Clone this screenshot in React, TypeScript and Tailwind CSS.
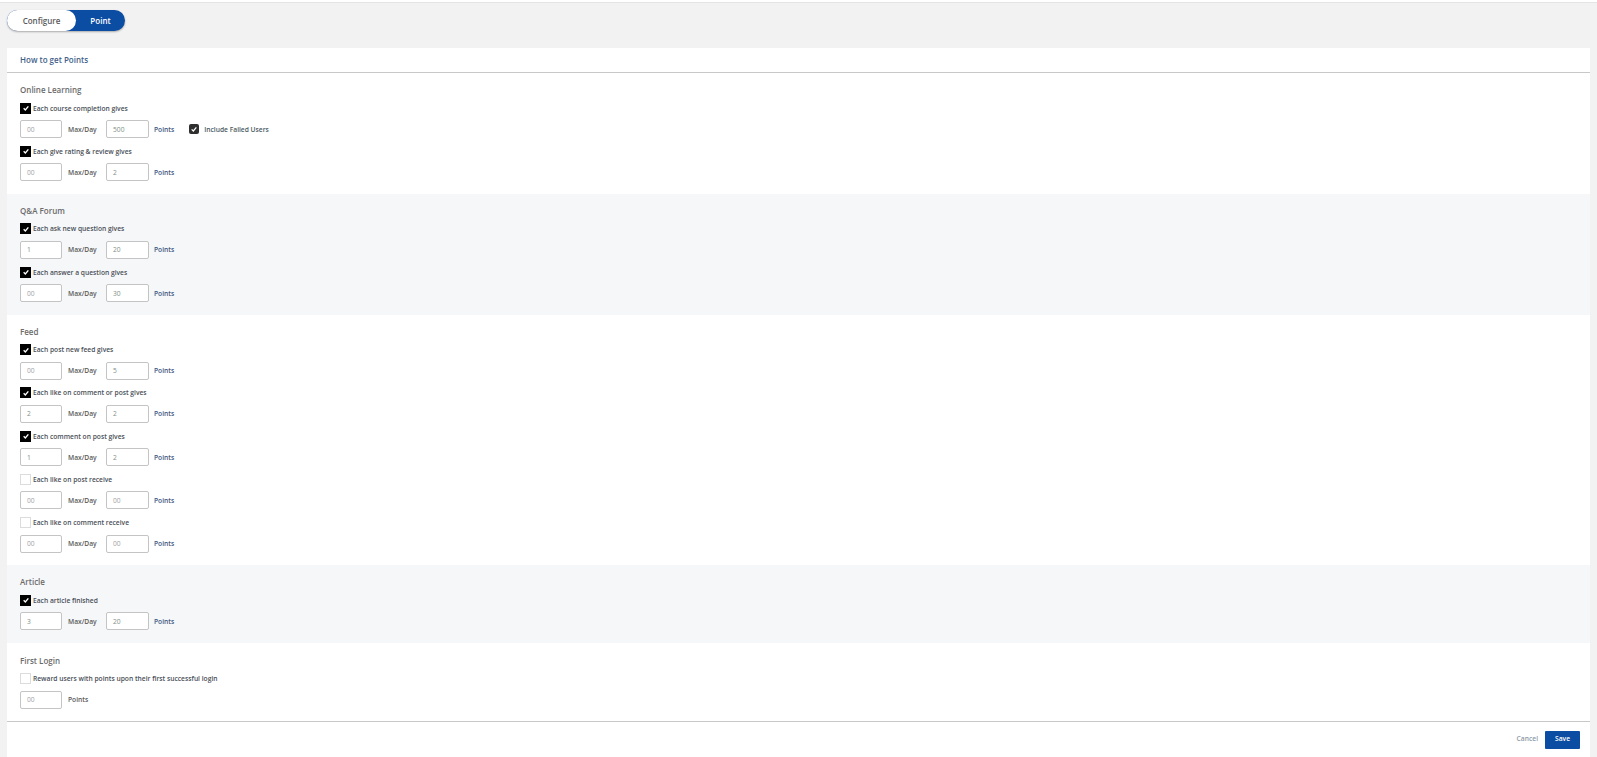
import React from 'react';

interface Rule {
  label: string;
  checked: boolean;
  max: string;
  points: string;
  extra?: boolean;
}

interface Section {
  title: string;
  gray?: boolean;
  rules: Rule[];
}

const sections: Section[] = [
  {
    title: 'Online Learning',
    rules: [
      { label: 'Each course completion gives', checked: true, max: '00', points: '500', extra: true },
      { label: 'Each give rating & review gives', checked: true, max: '00', points: '2' },
    ],
  },
  {
    title: 'Q&A Forum',
    gray: true,
    rules: [
      { label: 'Each ask new question gives', checked: true, max: '1', points: '20' },
      { label: 'Each answer a question gives', checked: true, max: '00', points: '30' },
    ],
  },
  {
    title: 'Feed',
    rules: [
      { label: 'Each post new feed gives', checked: true, max: '00', points: '5' },
      { label: 'Each like on comment or post gives', checked: true, max: '2', points: '2' },
      { label: 'Each comment on post gives', checked: true, max: '1', points: '2' },
      { label: 'Each like on post receive', checked: false, max: '00', points: '00' },
      { label: 'Each like on comment receive', checked: false, max: '00', points: '00' },
    ],
  },
  {
    title: 'Article',
    gray: true,
    rules: [{ label: 'Each article finished', checked: true, max: '3', points: '20' }],
  },
];

const Check = ({ checked }: { checked: boolean }) =>
  checked ? (
    <span className="flex h-[11px] w-[11px] items-center justify-center bg-black">
      <svg viewBox="0 0 12 12" className="h-[8px] w-[8px]" fill="none" stroke="white" strokeWidth="2">
        <path d="M2.5 6.5 5 9l4.5-5.5" />
      </svg>
    </span>
  ) : (
    <span className="h-[11px] w-[11px] border border-[#dcdcdc] bg-white" />
  );

const Field = ({ value, wide }: { value: string; wide?: boolean }) => (
  <input
    readOnly
    value={value}
    className={`h-[18px] rounded-[2px] border border-[#c4c4c4] bg-white pl-[6px] text-[6.7px] outline-none ${
      wide ? 'w-[43px]' : 'w-[42px]'
    } ${value === '00' ? 'text-[#a3a3a3]' : 'text-[#7f8f86]'}`}
  />
);

const Unit = ({ children, blue }: { children: React.ReactNode; blue?: boolean }) => (
  <span className={`block text-[6.7px] font-semibold leading-[11px] ${blue ? 'text-[#3f5680]' : 'text-[#5a5a5a]'}`}>
    {children}
  </span>
);

const RuleRow = ({ rule }: { rule: Rule }) => (
  <div className="flex flex-col gap-[6.5px]">
    <div className="flex h-[11px] items-center gap-[2px]">
      <Check checked={rule.checked} />
      <span className="text-[6.7px] font-semibold leading-[11px] text-[#4a4f57]">{rule.label}</span>
    </div>
    <div className="flex h-[18px] items-center">
      <Field value={rule.max} />
      <div className="ml-[6px] w-[38px]">
        <Unit>Max/Day</Unit>
      </div>
      <Field value={rule.points} wide />
      <div className="ml-[5px]">
        <Unit blue>Points</Unit>
      </div>
      {rule.extra && (
        <div className="ml-[15px] flex items-center gap-[5px]">
          <span className="flex h-[10px] w-[10px] items-center justify-center rounded-[2px] bg-[#2f2f2f]">
            <svg viewBox="0 0 12 12" className="h-[8px] w-[8px]" fill="none" stroke="white" strokeWidth="1.8">
              <path d="M2.5 6.5 5 9l4.5-5.5" />
            </svg>
          </span>
          <span className="text-[6.7px] font-semibold leading-[11px] text-[#4a5a63]">Include Failed Users</span>
        </div>
      )}
    </div>
  </div>
);

const SectionBlock = ({ section }: { section: Section }) => (
  <section className={`px-[13px] pb-[12.5px] pt-[11px] ${section.gray ? 'bg-[#f6f7f9]' : 'bg-white'}`}>
    <h3 className="mb-[7.5px] h-[11px] text-[8px] font-semibold leading-[11px] text-[#6b6b6b]">{section.title}</h3>
    <div className="flex flex-col gap-[7.75px]">
      {section.rules.map((rule) => (
        <RuleRow key={rule.label} rule={rule} />
      ))}
    </div>
  </section>
);

export default function App() {
  return (
    <div className="h-[757px] w-[1597px] overflow-hidden bg-[#f2f2f2] font-['Open_Sans',sans-serif]">
      <div className="h-[3px] border-b border-[#e4e4e4] bg-white" />
      <div className="px-[7px] pb-[17px] pt-[7px]">
        <div className="flex h-[21px] w-[118px] rounded-full bg-[#0b4da2] shadow-[0_1px_2px_rgba(0,0,0,0.3)]">
          <button className="w-[69px] rounded-full bg-white text-[8px] font-semibold leading-none text-[#5a5a5a]">Configure</button>
          <button className="flex-1 text-[8px] font-semibold leading-none text-white">Point</button>
        </div>
      </div>
      <div className="ml-[7px] w-[1583px] bg-white">
        <div className="flex h-[25px] items-center border-b border-[#c8c8c8] px-[13px] text-[8px] font-semibold text-[#3f5f8a]">
          How to get Points
        </div>
        {sections.map((section) => (
          <SectionBlock key={section.title} section={section} />
        ))}
        <section className="border-b border-[#c8c8c8] bg-white px-[13px] pb-[12px] pt-[12px]">
          <h3 className="mb-[7.5px] h-[11px] text-[8px] font-semibold leading-[11px] text-[#6b6b6b]">First Login</h3>
          <div className="flex flex-col gap-[6.5px]">
            <div className="flex h-[11px] items-center gap-[2px]">
              <Check checked={false} />
              <span className="text-[6.7px] font-semibold leading-[11px] text-[#4a4f57]">
                Reward users with points upon their first successful login
              </span>
            </div>
            <div className="flex h-[18px] items-center gap-[6px]">
              <Field value="00" />
              <Unit>Points</Unit>
            </div>
          </div>
        </section>
        <div className="flex h-[36px] items-center justify-end gap-[7px] pr-[10px]">
          <button className="text-[6.7px] font-semibold leading-none text-[#8d99a8]">Cancel</button>
          <button className="h-[18px] w-[35px] rounded-[1px] bg-[#0b4da2] text-[6.7px] font-semibold leading-none text-white">Save</button>
        </div>
      </div>
    </div>
  );
}
